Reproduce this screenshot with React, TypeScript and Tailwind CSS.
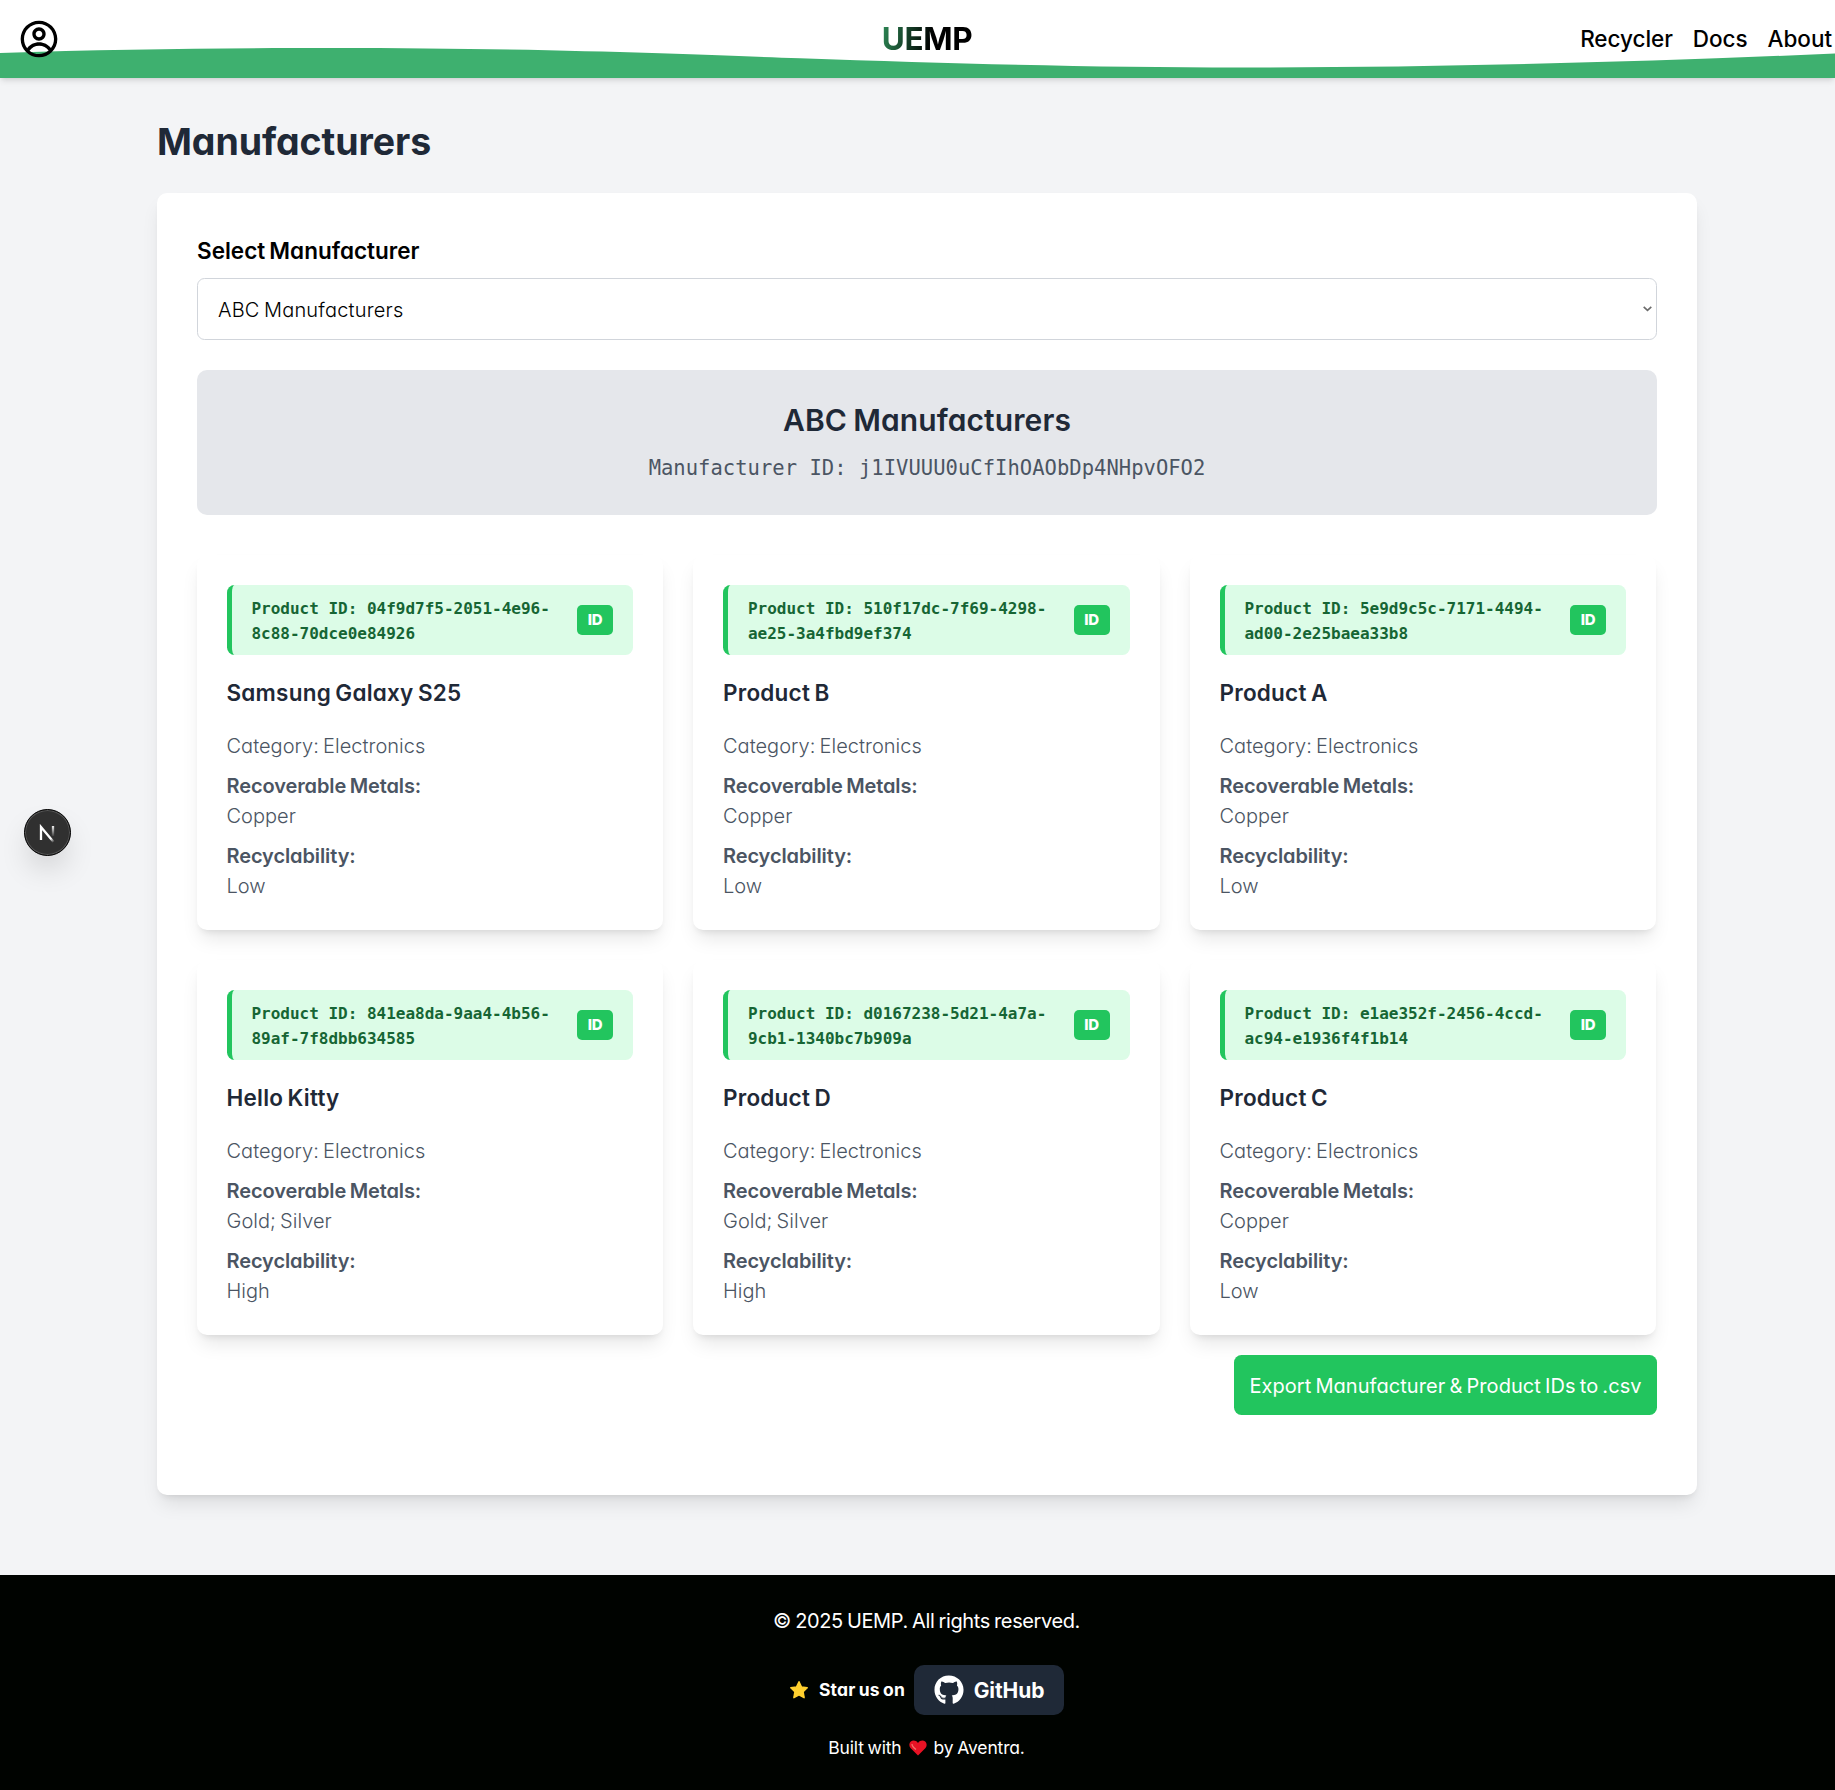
import { CgProfile } from "react-icons/cg";
import { FaGithub } from "react-icons/fa";

const products = [
  { id: ["04f9d7f5-2051-4e96-", "8c88-70dce0e84926"], name: "Samsung Galaxy S25", metals: "Copper", level: "Low" },
  { id: ["510f17dc-7f69-4298-", "ae25-3a4fbd9ef374"], name: "Product B", metals: "Copper", level: "Low" },
  { id: ["5e9d9c5c-7171-4494-", "ad00-2e25baea33b8"], name: "Product A", metals: "Copper", level: "Low" },
  { id: ["841ea8da-9aa4-4b56-", "89af-7f8dbb634585"], name: "Hello Kitty", metals: "Gold; Silver", level: "High" },
  { id: ["d0167238-5d21-4a7a-", "9cb1-1340bc7b909a"], name: "Product D", metals: "Gold; Silver", level: "High" },
  { id: ["e1ae352f-2456-4ccd-", "ac94-e1936f4f1b14"], name: "Product C", metals: "Copper", level: "Low" },
];

function Header() {
  return (
    <header className="relative h-[78px] bg-white shadow-md">
      <svg className="absolute inset-0" width="1835" height="78" viewBox="0 0 1835 78">
        <path
          fill="#3eb06f"
          d="M0 53C115 49 230 48 330 48C560 48 700 55 800 58.3C960 64 1100 67.5 1240 67.5C1440 67.5 1640 62 1835 53.5V78H0Z"
        />
      </svg>
      <div className="relative grid h-full w-[1854px] grid-cols-3 items-center">
        <CgProfile className="ml-[19px] size-10 text-black" />
        <div className="flex justify-center">
          <span className="bg-[linear-gradient(100deg,#2e8b57,#000_55%)] bg-clip-text text-[31.5px] font-bold tracking-[-0.3px] text-transparent">
            UEMP
          </span>
        </div>
        <nav className="flex justify-end gap-5 pr-[22px] text-[22.5px] font-medium tracking-[-0.05px] text-black">
          <a>Recycler</a>
          <a>Docs</a>
          <a>About</a>
        </nav>
      </div>
    </header>
  );
}

function ProductCard({ product }: { product: (typeof products)[number] }) {
  return (
    <div className="h-[375px] rounded-[10px] bg-white p-[30px] shadow-[0_12px_19px_-4px_rgba(0,0,0,0.1),0_5px_7px_-4px_rgba(0,0,0,0.1)]">
      <div className="flex h-[70px] items-center justify-between rounded-[7.5px] border-l-[5px] border-[#22c55e] bg-[#dcfce7] px-5">
        <p className="pt-0.5 text-[16px] leading-[25px] font-bold tracking-[-0.01px] whitespace-nowrap text-[#166534] [font-family:'DejaVu_Sans_Mono',monospace]">
          Product ID: {product.id[0]}
          <br />
          {product.id[1]}
        </p>
        <span className="flex h-[30px] w-9 items-center justify-center rounded-[5px] bg-[#22c55e] text-[15px] font-extrabold tracking-[-0.3px] text-white">
          ID
        </span>
      </div>
      <h3 className="mt-5 text-[22.5px] leading-[35px] font-semibold tracking-[0.22px] text-[#1f2937] [word-spacing:-1.5px]">
        {product.name}
      </h3>
      <div className="text-[20px] leading-[30px] font-light tracking-[0.03px] text-[#4b5563] [word-spacing:-1.5px]">
        <p className="mt-[21px]">Category: Electronics</p>
        <p className="mt-2.5 font-semibold tracking-[-0.1px]">Recoverable Metals:</p>
        <p>{product.metals}</p>
        <p className="mt-2.5 font-semibold tracking-[-0.1px]">Recyclability:</p>
        <p>{product.level}</p>
      </div>
    </div>
  );
}

export default function App() {
  return (
    <div className="relative flex h-[1790px] w-[1835px] flex-col overflow-hidden bg-[#f3f4f6] font-[Inter,sans-serif] [font-feature-settings:'cv11']">
      <Header />
      <main className="mx-[157px] w-[1540px] flex-1">
        <h1 className="mt-[41px] text-[37.5px] leading-[45px] font-bold tracking-[-0.07px] text-[#1f2937]">Manufacturers</h1>
        <section className="mt-[29px] h-[1302px] rounded-[10px] bg-white p-10 shadow-[0_12px_19px_-4px_rgba(0,0,0,0.1),0_5px_7px_-4px_rgba(0,0,0,0.1)]">
          <p className="text-[22.5px] leading-[35px] font-semibold text-black [word-spacing:-1.5px]">Select Manufacturer</p>
          <div className="mt-2.5 flex h-[62px] items-center justify-between rounded-[7.5px] border border-[#d1d5db] pr-1 pl-5 text-[20px] font-light tracking-[0.2px] text-black [word-spacing:-1.5px]">
            <span className="pt-0.5">ABC Manufacturers</span>
            <svg width="9" height="6" viewBox="0 0 9 6" fill="none" stroke="#6b6b6b" strokeWidth="1.6">
              <path d="M0.7 0.8L4.5 4.4L8.3 0.8" />
            </svg>
          </div>
          <div className="mt-[30px] h-[145px] rounded-[10px] bg-[#e5e7eb] pt-[30px] text-center">
            <h2 className="text-[30px] leading-10 font-semibold tracking-[0.1px] text-[#1f2937] [word-spacing:-1.5px]">ABC Manufacturers</h2>
            <p className="mt-[11px] text-[20.5px] leading-[35px] tracking-[0.03px] text-[#4b5563] [font-family:'DejaVu_Sans_Mono',monospace]">
              Manufacturer ID: j1IVUUU0uCfIhOAObDp4NHpvOFO2
            </p>
          </div>
          <div className="mt-10 mr-px -ml-[0.5px] grid grid-cols-3 gap-[30px]">
            {products.map((p) => (
              <ProductCard key={p.name} product={p} />
            ))}
          </div>
          <div className="mt-5 flex justify-end">
            <button className="h-[60px] w-[423px] rounded-[7.5px] bg-[#22c55e] pt-0.5 text-[20px] tracking-[0.05px] whitespace-nowrap text-white [word-spacing:-1.5px]">
              Export Manufacturer &amp; Product IDs to .csv
            </button>
          </div>
        </section>
      </main>
      <footer className="flex h-[215px] w-[1853px] flex-col items-center bg-[#000300] pt-[31px] text-white">
        <p className="text-[20px] leading-[30px] tracking-[-0.4px] [word-spacing:-1px]">© 2025 UEMP. All rights reserved.</p>
        <div className="mt-[29px] flex h-[50px] items-center">
          <svg className="mr-2.5" width="20" height="20" viewBox="0 0 20 20">
            <path
              fill="#ffd02f"
              stroke="#ffd02f"
              strokeWidth="1.5"
              strokeLinejoin="round"
              d="M10 1.8L12.5 7L18.2 7.8L14.1 11.8L15.1 17.7L10 14.9L4.9 17.7L5.9 11.8L1.8 7.8L7.5 7Z"
            />
          </svg>
          <span className="text-[17.5px] font-bold tracking-[0.15px] [word-spacing:-1px]">Star us on</span>
          <a className="ml-[9px] flex h-[50px] w-[150px] items-center justify-center gap-2.5 rounded-[10px] bg-[#1f2937]">
            <FaGithub className="size-[30px]" />
            <span className="pt-0.5 text-[21px] font-bold tracking-[-0.1px]">GitHub</span>
          </a>
        </div>
        <p className="mt-5 flex items-center text-[17.5px] leading-[25px] tracking-[-0.15px] [word-spacing:-1px]">
          Built with
          <svg className="mx-[7px]" width="18" height="16" viewBox="0 0 18 16">
            <path fill="#e81224" d="M9 15.5L1.5 8C-.2 6 .1 3.2 1.8 1.6C3.8 0 7 .2 9 3C11 .2 14.2 0 16.2 1.6C17.9 3.2 18.2 6 16.5 8Z" />
            <path stroke="#f4706b" strokeWidth="1.3" fill="none" d="M3 4C3 6.500 5 8 7 9.500" />
          </svg>
          by Aventra.
        </p>
      </footer>
      <div className="absolute top-[809px] left-6 flex size-[47px] items-center justify-center rounded-full border border-black bg-[#303030] shadow-[0_16px_32px_-8px_rgba(0,0,0,0.24),inset_0_0_0_1px_#555]">
        <svg className="-translate-x-px translate-y-px" width="18" height="19" viewBox="0 0 18 19" fill="none">
          <defs>
            <linearGradient id="nDiag" x1="9" y1="9" x2="16" y2="18" gradientUnits="userSpaceOnUse">
              <stop offset="0.6" stopColor="white" />
              <stop offset="1" stopColor="white" stopOpacity="0" />
            </linearGradient>
            <linearGradient id="nStem" x1="15" y1="1" x2="15" y2="13" gradientUnits="userSpaceOnUse">
              <stop stopColor="white" />
              <stop offset="1" stopColor="white" stopOpacity="0" />
            </linearGradient>
          </defs>
          <path d="M3 16V3L16 18.500" stroke="url(#nDiag)" strokeWidth="2.300" />
          <path d="M15 2V12" stroke="url(#nStem)" strokeWidth="2.300" />
        </svg>
      </div>
    </div>
  );
}
